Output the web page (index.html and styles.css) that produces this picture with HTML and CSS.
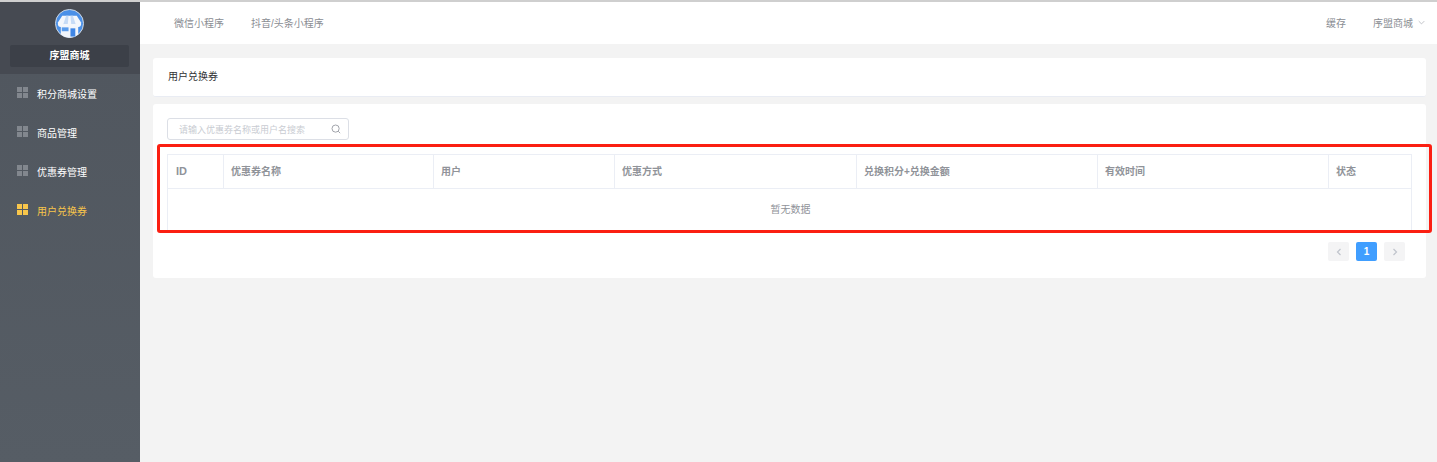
FILE: index.html
```html
<!DOCTYPE html>
<html lang="zh-CN">
<head>
<meta charset="utf-8">
<title>用户兑换券</title>
<link rel="stylesheet" href="styles.css">
</head>
<body>
<div class="app">
  <aside class="sidebar">
    <div class="brand">
      <svg class="logo" viewBox="0 0 30 30" width="29" height="29">
        <circle cx="15" cy="15" r="14.5" fill="#4a90e8" stroke="#d5dbe2" stroke-width="1"/>
        <path d="M6 15h18v11.500a14 14 0 0 1-18 0z" fill="#f1f5fb"/>
        <path d="M7.500 7h15l4.500 7v2H3v-2z" fill="#f4f7fc"/>
        <path d="M11.500 7h2.500l-.8 9H8.500zM16 7h2.500l3 9H16.800z" fill="#c6dbf6"/>
        <path d="M3 15.500a3 3 0 0 0 6 0 3 3 0 0 0 6 0 3 3 0 0 0 6 0 3 3 0 0 0 6 0z" fill="#f4f7fc"/>
        <rect x="7" y="19" width="7" height="4" fill="#5a9cec"/>
        <rect x="16" y="20" width="5" height="8.500" fill="#3f86e6"/>
      </svg>
      <div class="brand-name">序盟商城</div>
    </div>
    <nav class="menu">
      <a class="menu-item"><span class="grid-icon"><i></i><i></i><i></i><i></i></span>积分商城设置</a>
      <a class="menu-item"><span class="grid-icon"><i></i><i></i><i></i><i></i></span>商品管理</a>
      <a class="menu-item"><span class="grid-icon"><i></i><i></i><i></i><i></i></span>优惠券管理</a>
      <a class="menu-item active"><span class="grid-icon"><i></i><i></i><i></i><i></i></span>用户兑换券</a>
    </nav>
  </aside>
  <div class="main">
    <header class="topbar">
      <div class="tabs"><a>微信小程序</a><a>抖音/头条小程序</a></div>
      <div class="top-right">
        <a class="cache">缓存</a>
        <a class="shop">序盟商城
          <svg viewBox="0 0 10 6" width="7" height="5"><path d="M1 1l4 4 4-4" fill="none" stroke="#a8abb2" stroke-width="1"/></svg>
        </a>
      </div>
    </header>
    <section class="content">
      <div class="card title-card">用户兑换券</div>
      <div class="card table-card">
        <div class="search">
          <span>请输入优惠券名称或用户名搜索</span>
          <svg viewBox="0 0 12 12" width="10" height="10"><circle cx="5.500" cy="5.500" r="4.300" fill="none" stroke="#8f939b" stroke-width="1"/><path d="M8.700 8.700l2.300 2.300" stroke="#8f939b" stroke-width="1"/></svg>
        </div>
        <table class="table">
          <colgroup>
            <col class="c-id"><col class="c-name"><col class="c-user"><col class="c-way"><col class="c-points"><col class="c-time"><col class="c-state">
          </colgroup>
          <thead>
            <tr><th class="id">ID</th><th>优惠券名称</th><th>用户</th><th>优惠方式</th><th>兑换积分+兑换金额</th><th>有效时间</th><th>状态</th></tr>
          </thead>
          <tbody>
            <tr><td colspan="7">暂无数据</td></tr>
          </tbody>
        </table>
        <div class="pager">
          <span class="page-btn"><svg viewBox="0 0 8 10" width="6" height="8"><path d="M6 1L2 5l4 4" fill="none" stroke="#c0c4cc" stroke-width="1.600"/></svg></span>
          <span class="page-btn current">1</span>
          <span class="page-btn"><svg viewBox="0 0 8 10" width="6" height="8"><path d="M2 1l4 4-4 4" fill="none" stroke="#c0c4cc" stroke-width="1.600"/></svg></span>
        </div>
      </div>
    </section>
  </div>
</div>
<div class="highlight"></div>
</body>
</html>
```
FILE: styles.css
```css
* { box-sizing: border-box; }
html, body { margin: 0; height: 100%; overflow: hidden; }
body {
  font-family: "Liberation Sans", "Noto Sans CJK SC", sans-serif;
  font-size: 10px;
  background: #f3f3f3;
  position: relative;
}
.app {
  display: flex;
  height: 100%;
  border-top: 2px solid #cfcfcf;
}
.sidebar {
  width: 140px;
  flex: none;
  background: linear-gradient(180deg, #50565e 0%, #565d65 100%);
}
.brand {
  height: 72px;
  background: #464a52;
  padding: 7px 11px 0 10px;
  display: flex;
  flex-direction: column;
  align-items: center;
}
.logo { display: block; }
.brand-name {
  margin-top: 7px;
  width: 119px;
  height: 22px;
  line-height: 21px;
  background: #3c4048;
  border-radius: 2px;
  color: #fff;
  text-align: center;
  font-size: 10px;
  font-weight: 700;
}
.menu-item {
  display: flex;
  align-items: center;
  height: 39px;
  padding-left: 17px;
  color: #fff;
  font-size: 10px;
}
.grid-icon {
  display: grid;
  grid-template-columns: 5px 5px;
  grid-auto-rows: 5px;
  gap: 1px;
  width: 11px;
  margin-right: 9px;
  position: relative;
  top: -1px;
}
.grid-icon i { background: #82878e; }
.menu-item.active { color: #f8c64b; }
.menu-item.active .grid-icon i { background: #f8c64b; }
.main { flex: 1; min-width: 0; }
.topbar {
  height: 42px;
  background: #fff;
  display: flex;
  justify-content: space-between;
  align-items: center;
  padding: 0 12px 1px 34px;
  color: #8a8d93;
}
.tabs { display: flex; gap: 27px; }
.top-right { display: flex; gap: 27px; align-items: center; }
.shop { display: flex; align-items: center; gap: 5px; }
.content { padding: 14px 11px 0 13px; }
.card { background: #fff; border-radius: 3px; }
.title-card {
  height: 39px;
  line-height: 37px;
  padding-left: 15px;
  color: #303133;
  border-bottom: 1px solid #e9ecf3;
  margin-bottom: 7px;
}
.table-card { height: 174px; padding: 14px 14px 0; }
.search {
  width: 182px;
  height: 22px;
  border: 1px solid #dcdfe6;
  border-radius: 3px;
  display: flex;
  justify-content: space-between;
  align-items: center;
  padding: 0 7px 0 11px;
  color: #c9ccd2;
  font-size: 9px;
}
.table {
  margin-top: 14px;
  width: 1244px;
  border-collapse: collapse;
  table-layout: fixed;
  color: #909399;
  font-size: 10px;
}
.c-id { width: 56px; }
.c-name { width: 210px; }
.c-user { width: 181px; }
.c-way { width: 242px; }
.c-points { width: 241px; }
.c-time { width: 231px; }
.c-state { width: 83px; }
.table th {
  height: 34px;
  border: 1px solid #ebeef5;
  text-align: left;
  padding: 0 7px 2px;
  font-weight: 700;
}
.table th.id { padding-left: 8px; font-size: 11px; }
.table td {
  height: 42px;
  border: 1px solid #ebeef5;
  text-align: center;
  padding: 0 0 3px 2px;
}
.pager {
  display: flex;
  justify-content: flex-end;
  gap: 7px;
  margin-top: 11px;
  padding-right: 7px;
}
.page-btn {
  width: 21px;
  height: 19px;
  background: #f4f4f5;
  border-radius: 2px;
  display: flex;
  align-items: center;
  justify-content: center;
  color: #fff;
  font-weight: 700;
  font-size: 10px;
}
.page-btn.current { background: #409eff; }
.highlight {
  position: absolute;
  left: 157px;
  top: 144px;
  width: 1275px;
  height: 89px;
  border: 3px solid #fb1f12;
  border-radius: 3px;
}
```
